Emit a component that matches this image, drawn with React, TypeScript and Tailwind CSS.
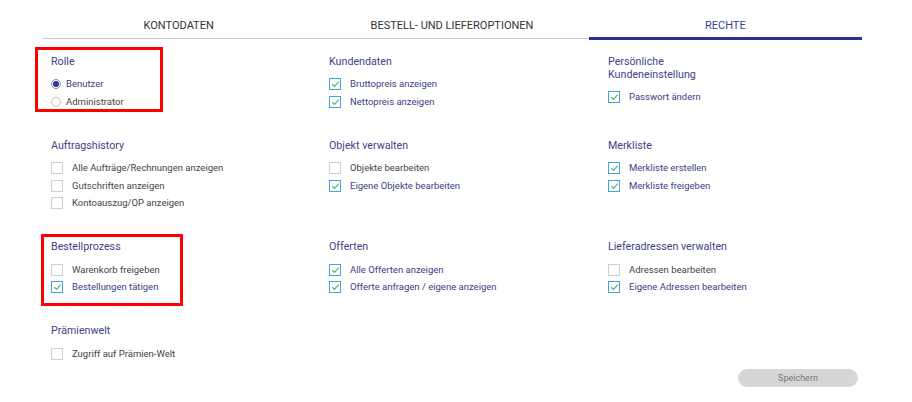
import React from "react";

type Item = { label: string; checked: boolean };
type Section = { title: React.ReactNode; items: Item[]; radio?: boolean; mark?: "rolle" | "bestell" };

const CheckBox = ({ checked }: { checked: boolean }) =>
  checked ? (
    <span className="flex h-[12px] w-[12px] shrink-0 items-center justify-center border border-[#3aa8df] bg-white">
      <svg width="9" height="8" viewBox="0 0 9 8">
        <path d="M1.3 4.2 L3.5 6.3 L7.8 1.6" fill="none" stroke="#5cb85c" strokeWidth="1.2" />
      </svg>
    </span>
  ) : (
    <span className="h-[12px] w-[12px] shrink-0 border border-[#cfcfcf] bg-white shadow-[inset_0_0_1px_rgba(0,0,0,0.08)]" />
  );

const Radio = ({ checked }: { checked: boolean }) =>
  checked ? (
    <span className="flex h-[10px] w-[10px] shrink-0 items-center justify-center rounded-full border border-[#8a8db8] bg-white">
      <span className="h-[6px] w-[6px] rounded-full bg-[#2e3192]" />
    </span>
  ) : (
    <span className="h-[10px] w-[10px] shrink-0 rounded-full border border-[#bdbdbd] bg-white" />
  );

const rows: Section[][] = [
  [
    { title: "Rolle", radio: true, mark: "rolle", items: [ { label: "Benutzer", checked: true }, { label: "Administrator", checked: false } ] },
    { title: "Kundendaten", items: [ { label: "Bruttopreis anzeigen", checked: true }, { label: "Nettopreis anzeigen", checked: true } ] },
    { title: <>Persönliche<br />Kundeneinstellung</>, items: [ { label: "Passwort ändern", checked: true } ] },
  ],
  [
    { title: "Auftragshistory", items: [ { label: "Alle Aufträge/Rechnungen anzeigen", checked: false }, { label: "Gutschriften anzeigen", checked: false }, { label: "Kontoauszug/OP anzeigen", checked: false } ] },
    { title: "Objekt verwalten", items: [ { label: "Objekte bearbeiten", checked: false }, { label: "Eigene Objekte bearbeiten", checked: true } ] },
    { title: "Merkliste", items: [ { label: "Merkliste erstellen", checked: true }, { label: "Merkliste freigeben", checked: true } ] },
  ],
  [
    { title: "Bestellprozess", mark: "bestell", items: [ { label: "Warenkorb freigeben", checked: false }, { label: "Bestellungen tätigen", checked: true } ] },
    { title: "Offerten", items: [ { label: "Alle Offerten anzeigen", checked: true }, { label: "Offerte anfragen / eigene anzeigen", checked: true } ] },
    { title: "Lieferadressen verwalten", items: [ { label: "Adressen bearbeiten", checked: false }, { label: "Eigene Adressen bearbeiten", checked: true } ] },
  ],
  [
    { title: "Prämienwelt", items: [ { label: "Zugriff auf Prämien-Welt", checked: false } ] },
  ],
];

const SectionBlock = ({ s }: { s: Section }) => (
  <div className="relative">
    {s.mark === "rolle" && (
      <div className="pointer-events-none absolute left-[-16px] top-[-7.5px] h-[65px] w-[128px] border-[3px] border-[#ff0000]" />
    )}
    {s.mark === "bestell" && (
      <div className="pointer-events-none absolute left-[-10px] top-[-6px] h-[72px] w-[142px] border-[3px] border-[#ff0000]" />
    )}
    <div className="mb-[8px] text-[10.7px] leading-[13px] text-[#3f4287]">{s.title}</div>
    {s.items.map((it) => (
      <div key={it.label} className={`flex h-[17.5px] items-center ${s.radio ? "gap-[5px]" : "gap-[9px]"}`}>
        {s.radio ? <Radio checked={it.checked} /> : <CheckBox checked={it.checked} />}
        <span className={`text-[9.5px] leading-[12px] ${it.checked ? "text-[#3b3d85]" : "text-[#444444]"}`}>{it.label}</span>
      </div>
    ))}
  </div>
);

export default function App() {
  return (
    <div className="h-[402px] w-[912px] bg-white font-['Roboto','Liberation_Sans',sans-serif]">
      <div className="ml-[42px] w-[820px]">
        <div className="grid h-[40px] grid-cols-3 items-start">
          <div className="flex h-[39px] justify-center border-b border-[#cccccc] pt-[19px] text-[11px] leading-[14px] text-[#333333]">KONTODATEN</div>
          <div className="flex h-[39px] justify-center border-b border-[#cccccc] pt-[19px] text-[11px] leading-[14px] text-[#333333]">BESTELL- UND LIEFEROPTIONEN</div>
          <div className="flex h-[40px] justify-center border-b-[3px] border-[#2b3390] pt-[19px] text-[11px] leading-[14px] text-[#3a3f94]">RECHTE</div>
        </div>
        <div className="flex flex-col gap-y-[28px] pl-[9px] pt-[14.5px]">
          {rows.map((r, i) => (
            <div key={i} className="grid grid-cols-[278px_279px_1fr]">
              {r.map((s, j) => (
                <SectionBlock key={j} s={s} />
              ))}
            </div>
          ))}
        </div>
        <div className="mt-[6px] flex justify-end pr-[4px]">
          <button className="h-[18px] w-[120px] rounded-full bg-[#d6d6d6] text-[9px] leading-[18px] text-[#777777]">Speichern</button>
        </div>
      </div>
    </div>
  );
}
